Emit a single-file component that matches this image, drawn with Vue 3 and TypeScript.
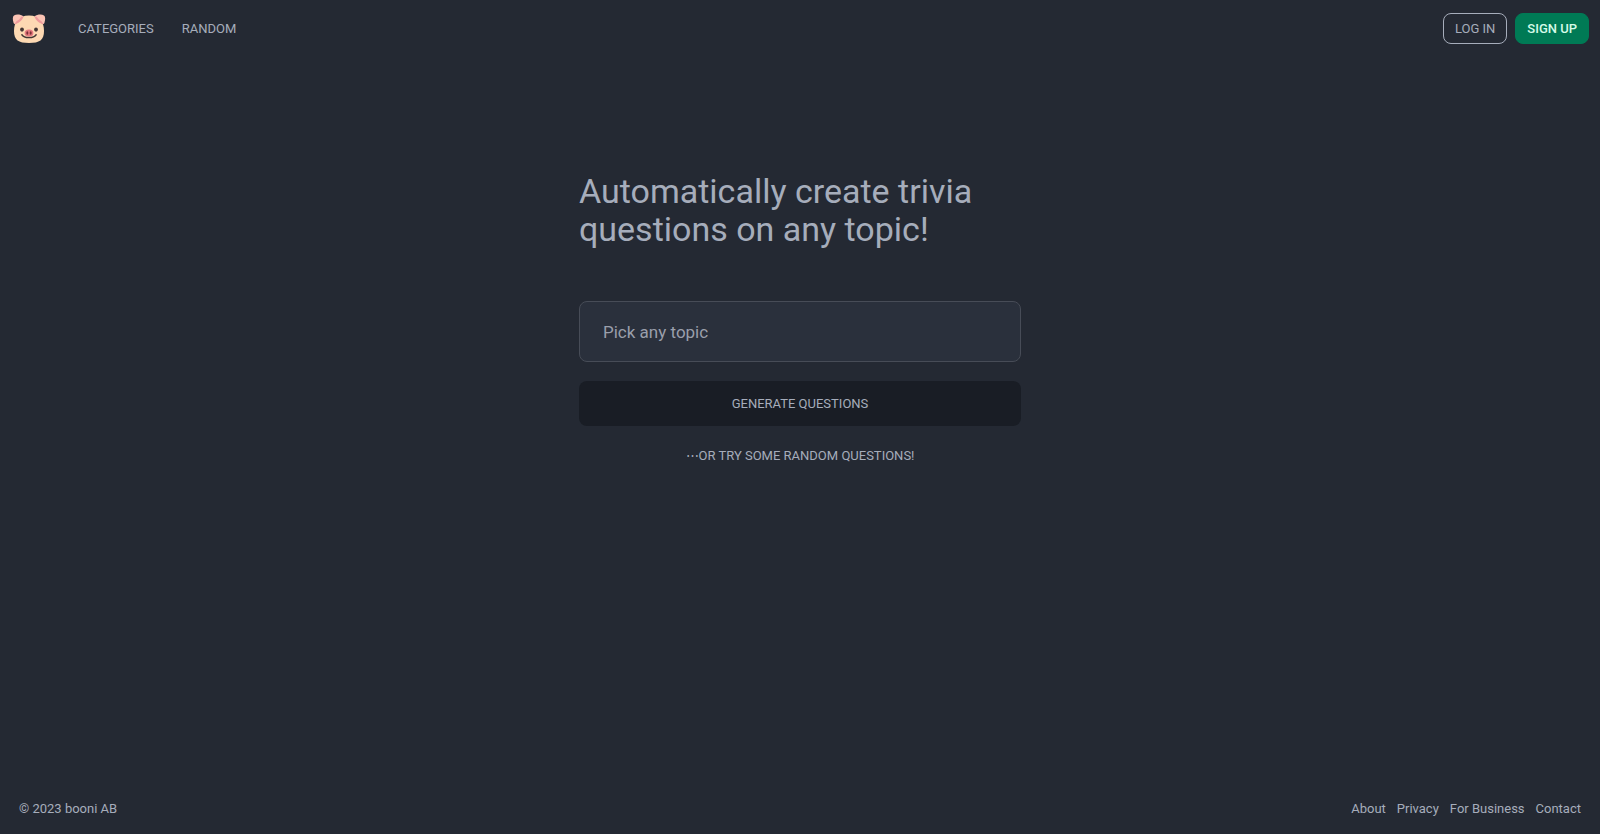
<script setup lang="ts">
import { ref } from 'vue'

const topic = ref('')
const navLinks: string[] = ['Categories', 'Random']
const footerLinks: string[] = ['About', 'Privacy', 'For Business', 'Contact']
</script>

<template>
  <div class="page">
    <header class="topbar">
      <a href="#" class="logo" aria-label="Home">
        <svg viewBox="0 0 34 31" width="34" height="31" aria-hidden="true">
          <path d="M17 2.6 C27.6 2.6 32 9 32 18 C32 27 27.6 30 17 30 C6.4 30 2 27 2 18 C2 9 6.4 2.6 17 2.6Z" fill="#fdd9b3" />
          <path d="M1.6 10 C.4 6 .6 3.4 2 2.4 C4.4 1 9 1.4 11.4 3.4 C10.4 6.4 7.6 9.6 4.6 10.4 C3.2 11 2.2 11.6 1.6 10Z" fill="#fbc3b4" />
          <path d="M2.6 10.6 C4 9.6 4 8 6 7.2 C8 6.6 7.8 4.6 10 3.6 L11.4 4 C10.2 7 7.6 9.6 4.8 10.6 C3.8 11.2 3 11.4 2.6 10.6Z" fill="#ee9a9b" />
          <path d="M32.4 10 C33.6 6 33.4 3.4 32 2.4 C29.6 1 25 1.4 22.6 3.4 C23.6 6.4 26.4 9.6 29.4 10.4 C30.8 11 31.8 11.6 32.4 10Z" fill="#fbc3b4" />
          <path d="M31.4 10.6 C30 9.6 30 8 28 7.2 C26 6.6 26.2 4.6 24 3.6 L22.6 4 C23.8 7 26.4 9.6 29.2 10.6 C30.2 11.2 31 11.4 31.4 10.6Z" fill="#ee9a9b" />
          <ellipse cx="10" cy="16.6" rx="1.9" ry="2.1" fill="#443735" />
          <ellipse cx="24" cy="16.6" rx="1.9" ry="2.1" fill="#443735" />
          <path d="M10 21.8 C12 25.4 22 25.4 24 21.8" fill="none" stroke="#443735" stroke-width="1.6" stroke-linecap="round" />
          <ellipse cx="17" cy="20" rx="4.4" ry="3.5" fill="#e57a80" />
          <ellipse cx="15.3" cy="20" rx="1" ry="1.7" fill="#7a3036" />
          <ellipse cx="18.7" cy="20" rx="1" ry="1.7" fill="#7a3036" />
        </svg>
      </a>
      <nav class="nav" aria-label="Main">
        <a v-for="link in navLinks" :key="link" href="#">{{ link }}</a>
      </nav>
      <div class="account">
        <button type="button" class="small-btn outline">Log in</button>
        <button type="button" class="small-btn solid">Sign up</button>
      </div>
    </header>

    <main class="main">
      <h1>Automatically create trivia questions on any topic!</h1>
      <form class="form" @submit.prevent>
        <input v-model="topic" type="text" placeholder="Pick any topic" aria-label="Pick any topic" />
        <button type="submit" class="generate">Generate questions</button>
        <button type="button" class="random">⋯or try some random questions!</button>
      </form>
    </main>

    <footer class="footer">
      <span>© 2023 booni AB</span>
      <nav class="footer-links" aria-label="Footer">
        <a v-for="link in footerLinks" :key="link" href="#">{{ link }}</a>
      </nav>
    </footer>
  </div>
</template>

<style>
body {
  margin: 0;
  background: #242933;
}
</style>

<style scoped>
.page {
  min-height: 100vh;
  box-sizing: border-box;
  display: flex;
  flex-direction: column;
  background: #242933;
  color: #a6adbb;
  font-family: Roboto, "Liberation Sans", sans-serif;
  font-size: 13px;
  line-height: 20px;
}

a {
  color: inherit;
  text-decoration: none;
}

button,
input {
  box-sizing: border-box;
  font: inherit;
  color: inherit;
}

button {
  cursor: pointer;
  text-transform: uppercase;
}

.topbar {
  display: flex;
  align-items: center;
  padding: 13px 11px 13px 12px;
}

.logo {
  display: flex;
}

.nav {
  display: flex;
  gap: 28px;
  margin-left: 32px;
  text-transform: uppercase;
}

.account {
  display: flex;
  gap: 8px;
  margin-left: auto;
}

.small-btn {
  height: 31px;
  padding: 0 11px;
  border: 1px solid #a6adbb;
  border-radius: 8px;
  background: transparent;
}

.small-btn.solid {
  border-color: #007a55;
  background: #007a55;
  color: #d5fbe8;
  font-weight: 500;
}

.main {
  flex: 1;
  width: 100%;
  max-width: 442px;
  margin: 0 auto;
  padding-top: 115px;
}

h1 {
  margin: 0;
  font-size: 34px;
  font-weight: 400;
  line-height: 38px;
}

.form {
  display: flex;
  flex-direction: column;
  margin-top: 53px;
}

.form input {
  width: 100%;
  height: 61px;
  padding: 0 23px;
  border: 1px solid #474c57;
  border-radius: 8px;
  background: #2a303c;
  font-size: 17px;
  outline: none;
}

.form input::placeholder {
  color: #9a9fab;
  opacity: 1;
}

.generate {
  height: 45px;
  margin-top: 19px;
  border: 0;
  border-radius: 8px;
  background: #191d25;
}

.random {
  align-self: center;
  margin-top: 20px;
  padding: 0;
  border: 0;
  background: transparent;
}

.footer {
  display: flex;
  justify-content: space-between;
  padding: 15px 19px;
}

.footer-links {
  display: flex;
  gap: 11px;
}
</style>
